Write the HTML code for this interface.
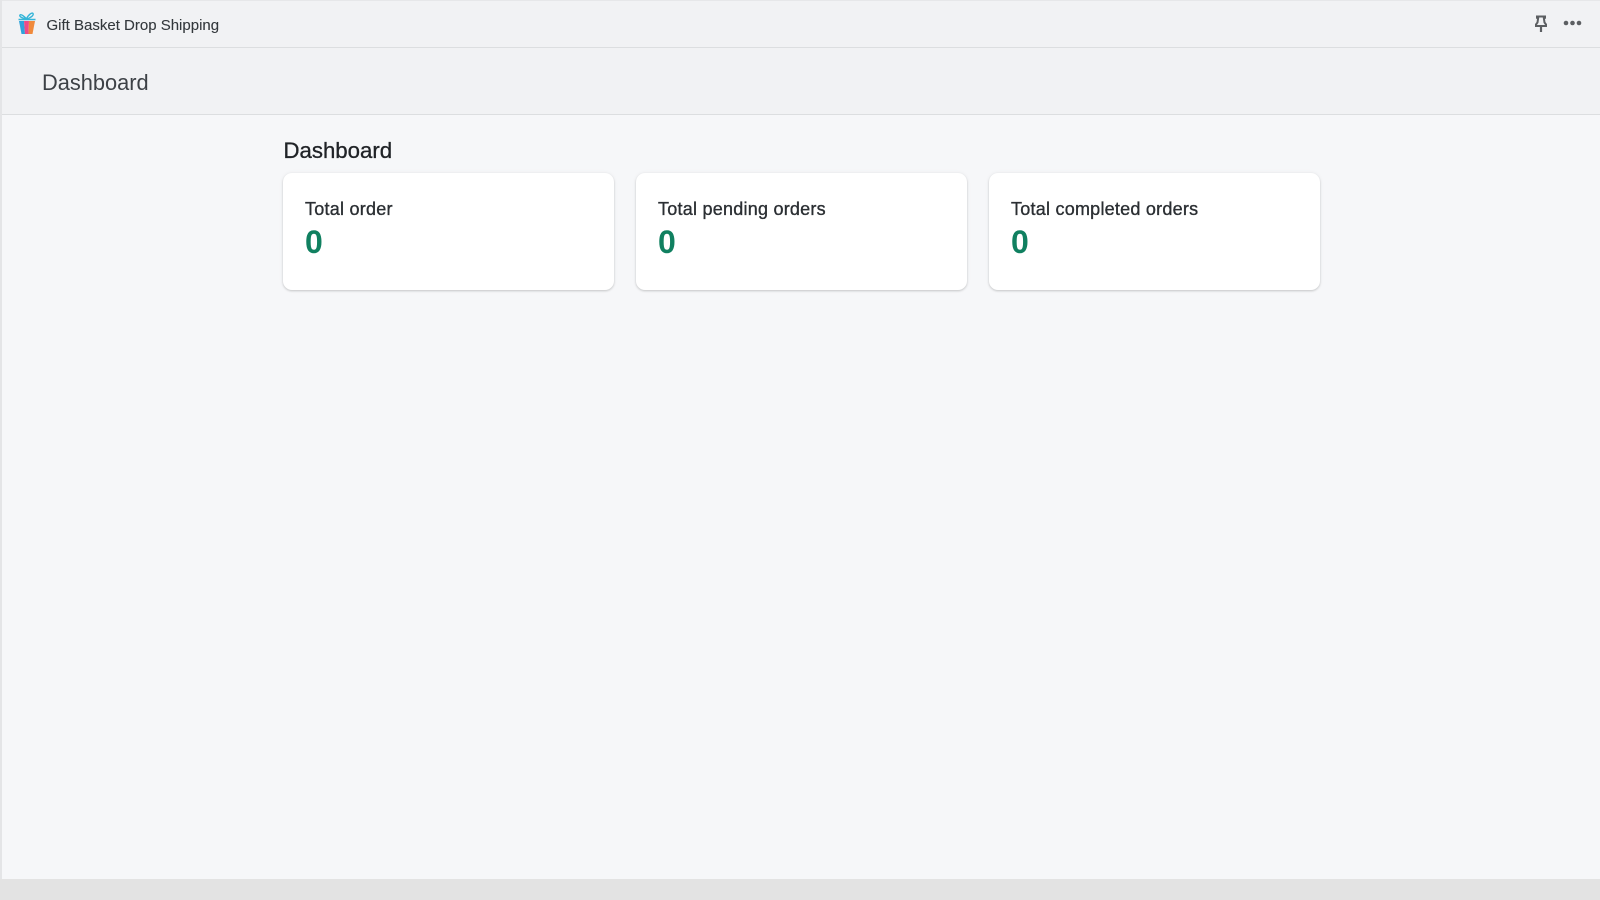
<!DOCTYPE html>
<html><head><meta charset="utf-8"><style>
html,body{margin:0;padding:0;width:1600px;height:900px;overflow:hidden;background:#f6f7f9;font-family:"Liberation Sans",sans-serif}
div{position:absolute;box-sizing:border-box;white-space:nowrap}
.card{top:173px;width:331px;height:117px;background:#fff;border-radius:9px;box-shadow:0 0 5px rgba(23,24,24,.05),0 1px 2px rgba(0,0,0,.18)}
.lab{left:22px;top:25px;font-size:18px;line-height:22px;color:#2b2f33;letter-spacing:.24px;-webkit-text-stroke:.35px #2b2f33}
.num{left:22px;top:50px;font-size:32px;line-height:38px;font-weight:700;color:#108060}
</style></head><body>
<div style="left:0;top:0;width:2px;height:879px;background:#e4e5e7"></div>
<div style="left:2px;top:0;width:1598px;height:48px;background:#f1f2f4;border-bottom:1px solid #dcdee0;border-top:1px solid #e6e7e9"></div>
<div style="left:2px;top:48px;width:1598px;height:67px;background:#f1f2f4;border-bottom:1px solid #dcdee0"></div>
<svg style="position:absolute;left:15px;top:11px" width="24" height="25" viewBox="0 0 24 25">
<path d="M4 10h5l1 13H6.500z" fill="#2ea3dc"/><path d="M9 10h5l-.5 13h-3.500z" fill="#ee4b86"/><path d="M14 10h6l-2.500 13H13.500z" fill="#f08a3c"/>
<path d="M3.500 8.500h17" stroke="#35b5d8" stroke-width="1.600"/><path d="M11.500 8C9 5 6 3 5 4s1 3 6.500 4zM11.500 8C13 4 17 1 18 2.500S16 7 11.500 8z" fill="none" stroke="#35b5d8" stroke-width="1.400"/>
</svg>
<div style="left:46.500px;top:16px;font-size:15px;line-height:20px;color:#33383c;-webkit-text-stroke:.1px #33383c">Gift Basket Drop Shipping</div>
<svg style="position:absolute;left:1533px;top:15px" width="16" height="18" viewBox="0 0 16 18"><path d="M4 1.500h8v1.200h-1.200l.7 4.800 1.500 2V11H3V9.500l1.500-2 .7-4.800H4z" fill="none" stroke="#5c5f62" stroke-width="2"/><path d="M8 11v6" stroke="#5c5f62" stroke-width="2.200"/></svg>
<svg style="position:absolute;left:1563px;top:19px" width="20" height="8" viewBox="0 0 20 8"><circle cx="3" cy="4" r="2.300" fill="#5c5f62"/><circle cx="9.500" cy="4" r="2.300" fill="#5c5f62"/><circle cx="16" cy="4" r="2.300" fill="#5c5f62"/></svg>
<div style="left:42px;top:69px;font-size:21.800px;line-height:28px;color:#3d4146">Dashboard</div>
<div style="left:283.500px;top:137px;font-size:22.200px;line-height:28px;color:#202327;-webkit-text-stroke:.3px #202327">Dashboard</div>
<div class="card" style="left:283px"><div class="lab">Total order</div><div class="num">0</div></div>
<div class="card" style="left:636px"><div class="lab">Total pending orders</div><div class="num">0</div></div>
<div class="card" style="left:989px"><div class="lab">Total completed orders</div><div class="num">0</div></div>
<div style="left:0;top:879px;width:1600px;height:21px;background:#e3e3e3"></div>
</body></html>
